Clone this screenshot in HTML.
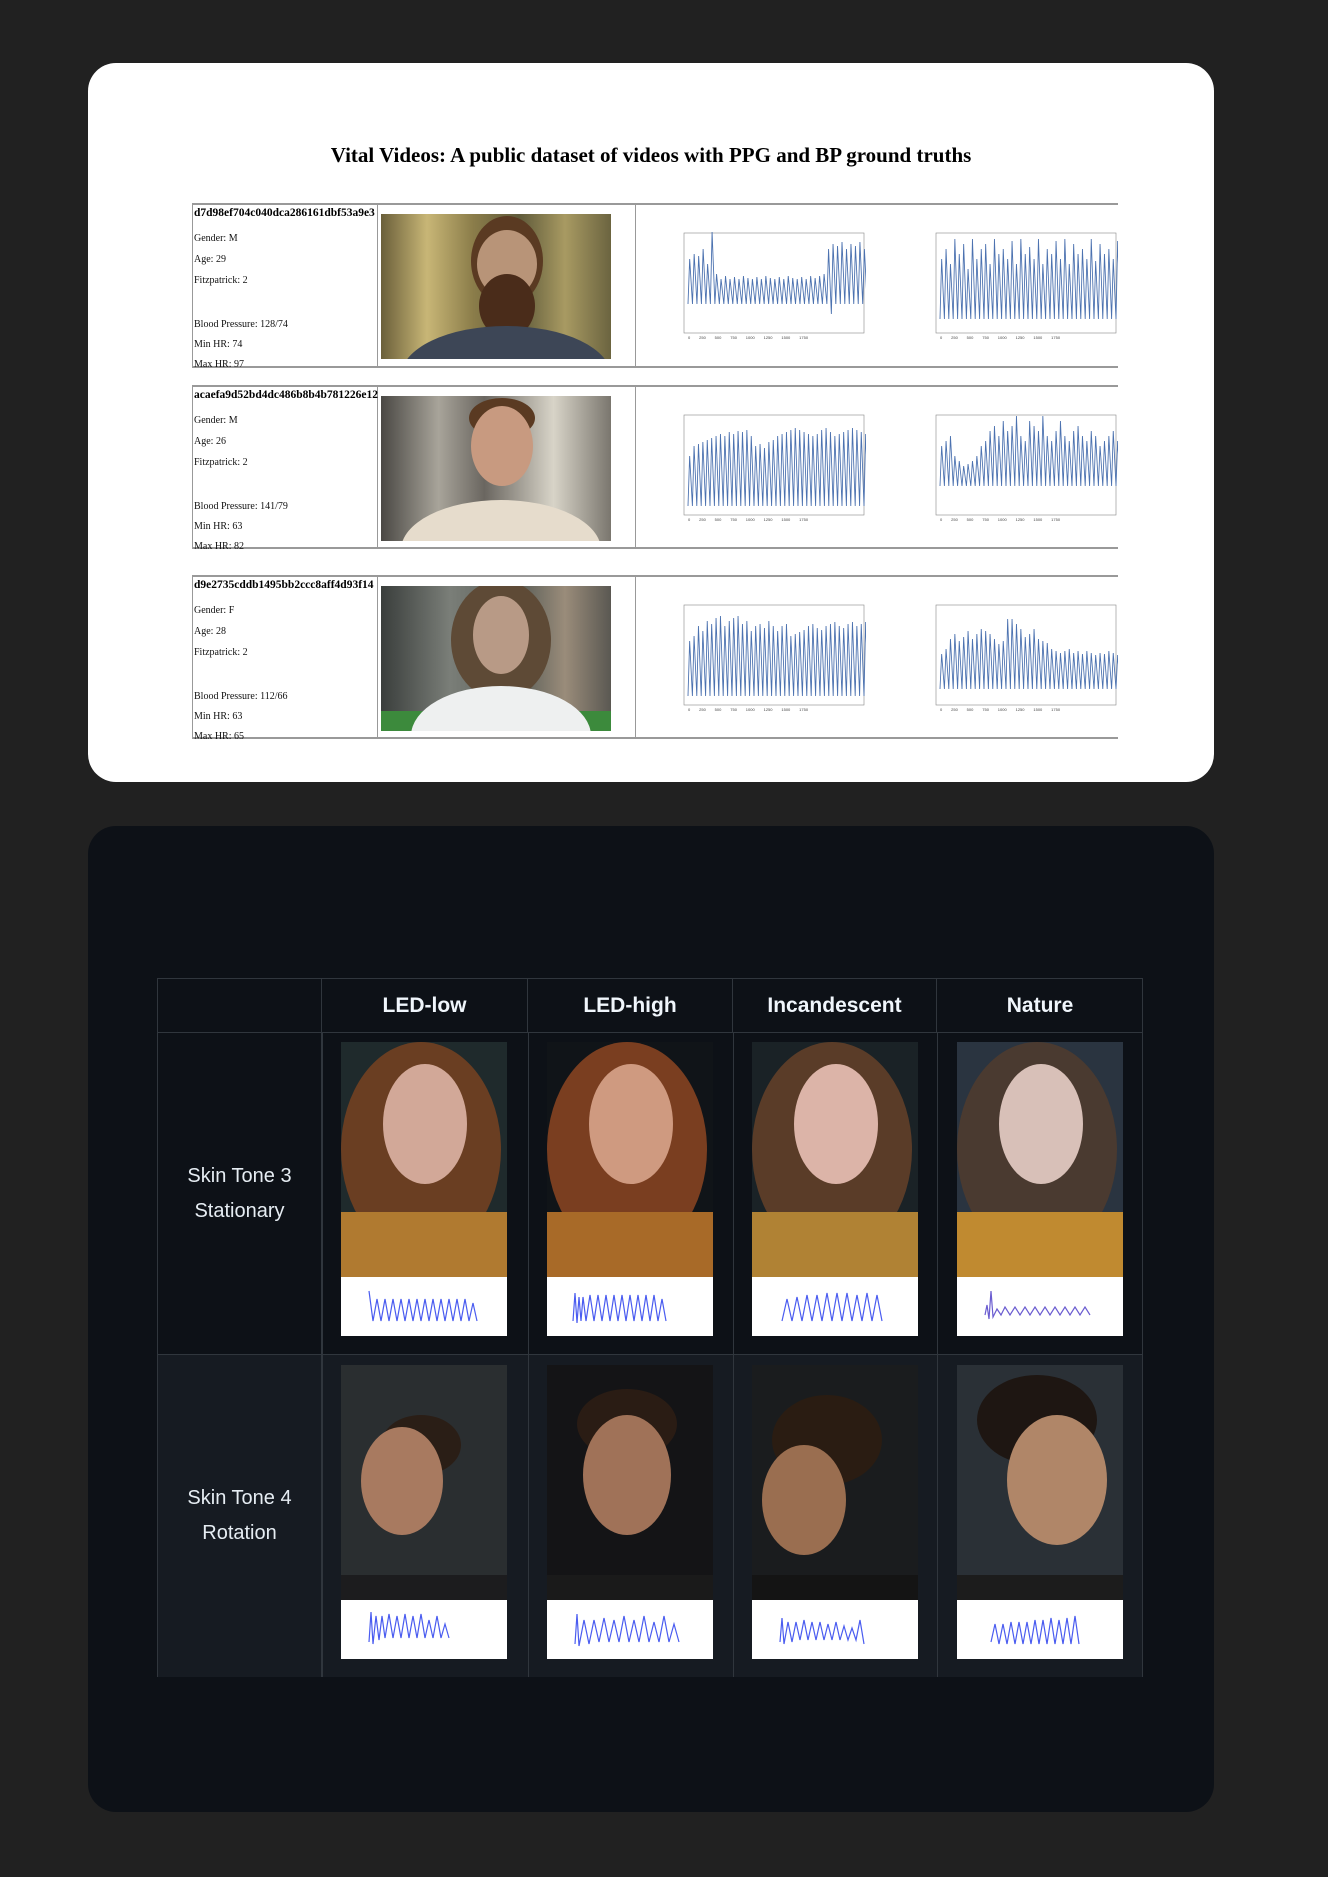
<!DOCTYPE html>
<html><head><meta charset="utf-8"><style>
*{margin:0;padding:0;box-sizing:border-box}
body{width:1328px;height:1877px;background:#212121;position:relative;overflow:hidden;font-family:"Liberation Serif",serif}
.card{position:absolute;left:88px;width:1126px;border-radius:28px}
.abs{position:absolute}
.title{position:absolute;top:80px;left:0;width:1126px;text-align:center;font-weight:bold;font-size:21px;color:#000}
.row{position:absolute;left:104px;width:926px;border-top:2px solid #999;border-bottom:2px solid #999}
.c1{position:absolute;left:0;top:0;bottom:0;width:186px;border-left:1px solid #999;border-right:1px solid #999;font-size:10px;color:#111}
.c2{position:absolute;left:186px;top:0;bottom:0;width:258px;border-right:1px solid #999}
.c1 b{position:absolute;left:1px;font-size:11.5px;color:#000}
.c1 span{position:absolute;left:1px}
.ph{position:absolute;left:3px;top:9px;width:230px;height:145px;overflow:hidden}
.ch{position:absolute;top:24px;width:196px;height:114px}
.cell{position:absolute;border-right:1px solid #30363d;border-bottom:1px solid #30363d}
.hd{color:#f0f6fc;font-family:"Liberation Sans",sans-serif;font-weight:bold;font-size:21px;text-align:center;line-height:54px}
.lab{color:#e6edf3;font-family:"Liberation Sans",sans-serif;font-size:20px;text-align:center;line-height:35px}
.fp{position:absolute;width:166px;height:294px;overflow:hidden}
.wv{position:absolute;left:0;bottom:0;width:166px;height:59px;background:#fff}
.o{position:absolute;border-radius:50%}
.ln{fill:none;stroke:#4c72b0;stroke-width:.8}
.wl{fill:none;stroke:#4a5cf0;stroke-width:1.2}
</style></head><body>

<div class="card" style="top:63px;height:719px;background:#fff">
<div class="title">Vital Videos: A public dataset of videos with PPG and BP ground truths</div>

<div class="row" style="top:140px;height:165px">
 <div class="c1"><b style="top:2px">d7d98ef704c040dca286161dbf53a9e3</b>
 <span style="top:28px">Gender: M</span><span style="top:49px">Age: 29</span><span style="top:70px">Fitzpatrick: 2</span>
 <span style="top:114px">Blood Pressure: 128/74</span><span style="top:134px">Min HR: 74</span><span style="top:154px">Max HR: 97</span></div>
 <div class="c2"><div class="ph" style="background:linear-gradient(90deg,#6a5f3a,#c8b676 20%,#8b7d4a 40%,#5f5a3a 60%,#a89a62 80%,#6b6440)">
  <div class="o" style="left:90px;top:2px;width:72px;height:90px;background:#5a3a22"></div>
  <div class="o" style="left:96px;top:16px;width:60px;height:68px;background:#b89478"></div>
  <div class="o" style="left:98px;top:60px;width:56px;height:64px;background:#4a2c1a"></div>
  <div class="o" style="left:20px;top:112px;width:210px;height:100px;background:#3d4656"></div></div></div>
 <svg class="ch" style="left:478px" viewBox="0 0 196 114"><rect x="14" y="4" width="180" height="100" fill="none" stroke="#888" stroke-width=".6"/><path class="ln" transform="translate(18,0) scale(1.12,1) translate(-18,0)" d="M18,75 l1.5,-45 l2.5,45 l1.5,-50 l2.5,50 l1.5,-48 l2.5,48 l1.5,-55 l2.5,55 l1.5,-40 l2.5,40 l1.5,-72 l2.5,72 l1.5,-30 l2.5,30 l1.5,-25 l2.5,25 l1.5,-28 l2.5,28 l1.5,-25 l2.5,25 l1.5,-27 l2.5,27 l1.5,-25 l2.5,25 l1.5,-28 l2.5,28 l1.5,-26 l2.5,26 l1.5,-25 l2.5,25 l1.5,-27 l2.5,27 l1.5,-25 l2.5,25 l1.5,-28 l2.5,28 l1.5,-26 l2.5,26 l1.5,-25 l2.5,25 l1.5,-27 l2.5,27 l1.5,-25 l2.5,25 l1.5,-28 l2.5,28 l1.5,-26 l2.5,26 l1.5,-25 l2.5,25 l1.5,-27 l2.5,27 l1.5,-25 l2.5,25 l1.5,-28 l2.5,28 l1.5,-26 l2.5,26 l1.5,-28 l2.5,28 l1.5,-30 l2.5,30 l1.5,-55 l2.5,65 l1.5,-70 l2.5,60 l1.5,-58 l2.5,58 l1.5,-62 l2.5,62 l1.5,-55 l2.5,55 l1.5,-60 l2.5,60 l1.5,-58 l2.5,58 l1.5,-62 l2.5,62 l1.5,-55 l2.5,55 l1.5,-60 l2.5,60 l1.5,-50 l2.5,50 l1.5,-45 l2.5,45"/><text x="18" y="110" font-size="4" fill="#444" font-family="Liberation Sans">0 &#160;&#160;&#160;&#160;&#160;&#160; 250 &#160;&#160;&#160;&#160;&#160;&#160; 500 &#160;&#160;&#160;&#160;&#160;&#160; 750 &#160;&#160;&#160;&#160;&#160;&#160; 1000 &#160;&#160;&#160;&#160;&#160;&#160; 1250 &#160;&#160;&#160;&#160;&#160;&#160; 1500 &#160;&#160;&#160;&#160;&#160;&#160; 1750</text></svg>
 <svg class="ch" style="left:730px" viewBox="0 0 196 114"><rect x="14" y="4" width="180" height="100" fill="none" stroke="#888" stroke-width=".6"/><path class="ln" transform="translate(18,0) scale(1.1,1) translate(-18,0)" d="M18,90 l1.5,-60 l2.5,60 l1.5,-70 l2.5,70 l1.5,-55 l2.5,55 l1.5,-80 l2.5,80 l1.5,-65 l2.5,65 l1.5,-75 l2.5,75 l1.5,-50 l2.5,50 l1.5,-80 l2.5,80 l1.5,-60 l2.5,60 l1.5,-70 l2.5,70 l1.5,-75 l2.5,75 l1.5,-55 l2.5,55 l1.5,-80 l2.5,80 l1.5,-65 l2.5,65 l1.5,-70 l2.5,70 l1.5,-60 l2.5,60 l1.5,-78 l2.5,78 l1.5,-55 l2.5,55 l1.5,-80 l2.5,80 l1.5,-65 l2.5,65 l1.5,-72 l2.5,72 l1.5,-60 l2.5,60 l1.5,-80 l2.5,80 l1.5,-55 l2.5,55 l1.5,-70 l2.5,70 l1.5,-65 l2.5,65 l1.5,-78 l2.5,78 l1.5,-60 l2.5,60 l1.5,-80 l2.5,80 l1.5,-55 l2.5,55 l1.5,-75 l2.5,75 l1.5,-65 l2.5,65 l1.5,-70 l2.5,70 l1.5,-60 l2.5,60 l1.5,-80 l2.5,80 l1.5,-58 l2.5,58 l1.5,-75 l2.5,75 l1.5,-65 l2.5,65 l1.5,-70 l2.5,70 l1.5,-60 l2.5,60 l1.5,-78 l2.5,78 l1.5,-55 l2.5,55 l1.5,-40 l2.5,40"/><text x="18" y="110" font-size="4" fill="#444" font-family="Liberation Sans">0 &#160;&#160;&#160;&#160;&#160;&#160; 250 &#160;&#160;&#160;&#160;&#160;&#160; 500 &#160;&#160;&#160;&#160;&#160;&#160; 750 &#160;&#160;&#160;&#160;&#160;&#160; 1000 &#160;&#160;&#160;&#160;&#160;&#160; 1250 &#160;&#160;&#160;&#160;&#160;&#160; 1500 &#160;&#160;&#160;&#160;&#160;&#160; 1750</text></svg>
</div>

<div class="row" style="top:322px;height:164px">
 <div class="c1"><b style="top:2px">acaefa9d52bd4dc486b8b4b781226e12</b>
 <span style="top:28px">Gender: M</span><span style="top:49px">Age: 26</span><span style="top:70px">Fitzpatrick: 2</span>
 <span style="top:114px">Blood Pressure: 141/79</span><span style="top:134px">Min HR: 63</span><span style="top:154px">Max HR: 82</span></div>
 <div class="c2"><div class="ph" style="background:linear-gradient(90deg,#4a4844,#a8a49a 25%,#6a6660 45%,#d8d4c8 75%,#7a766e)">
  <div class="o" style="left:88px;top:2px;width:66px;height:40px;background:#5a3a22"></div>
  <div class="o" style="left:90px;top:10px;width:62px;height:80px;background:#c89a80"></div>
  <div class="o" style="left:20px;top:104px;width:200px;height:100px;background:#e6dccc"></div></div></div>
 <svg class="ch" style="left:478px" viewBox="0 0 196 114"><rect x="14" y="4" width="180" height="100" fill="none" stroke="#888" stroke-width=".6"/><path class="ln" transform="translate(18,0) scale(1.1,1) translate(-18,0)" d="M18,95 l1.5,-50 l2.5,50 l1.5,-60 l2.5,60 l1.5,-62 l2.5,62 l1.5,-64 l2.5,64 l1.5,-66 l2.5,66 l1.5,-68 l2.5,68 l1.5,-70 l2.5,70 l1.5,-72 l2.5,72 l1.5,-70 l2.5,70 l1.5,-74 l2.5,74 l1.5,-72 l2.5,72 l1.5,-75 l2.5,75 l1.5,-74 l2.5,74 l1.5,-76 l2.5,76 l1.5,-70 l2.5,70 l1.5,-60 l2.5,60 l1.5,-62 l2.5,62 l1.5,-58 l2.5,58 l1.5,-64 l2.5,64 l1.5,-66 l2.5,66 l1.5,-70 l2.5,70 l1.5,-72 l2.5,72 l1.5,-74 l2.5,74 l1.5,-76 l2.5,76 l1.5,-78 l2.5,78 l1.5,-76 l2.5,76 l1.5,-74 l2.5,74 l1.5,-72 l2.5,72 l1.5,-70 l2.5,70 l1.5,-72 l2.5,72 l1.5,-76 l2.5,76 l1.5,-78 l2.5,78 l1.5,-74 l2.5,74 l1.5,-70 l2.5,70 l1.5,-72 l2.5,72 l1.5,-74 l2.5,74 l1.5,-76 l2.5,76 l1.5,-78 l2.5,78 l1.5,-76 l2.5,76 l1.5,-74 l2.5,74 l1.5,-72 l2.5,72 l1.5,-70 l2.5,70 l1.5,-68 l2.5,68"/><text x="18" y="110" font-size="4" fill="#444" font-family="Liberation Sans">0 &#160;&#160;&#160;&#160;&#160;&#160; 250 &#160;&#160;&#160;&#160;&#160;&#160; 500 &#160;&#160;&#160;&#160;&#160;&#160; 750 &#160;&#160;&#160;&#160;&#160;&#160; 1000 &#160;&#160;&#160;&#160;&#160;&#160; 1250 &#160;&#160;&#160;&#160;&#160;&#160; 1500 &#160;&#160;&#160;&#160;&#160;&#160; 1750</text></svg>
 <svg class="ch" style="left:730px" viewBox="0 0 196 114"><rect x="14" y="4" width="180" height="100" fill="none" stroke="#888" stroke-width=".6"/><path class="ln" transform="translate(18,0) scale(1.1,1) translate(-18,0)" d="M18,75 l1.5,-40 l2.5,40 l1.5,-45 l2.5,45 l1.5,-50 l2.5,50 l1.5,-30 l2.5,30 l1.5,-25 l2.5,25 l1.5,-20 l2.5,20 l1.5,-22 l2.5,22 l1.5,-25 l2.5,25 l1.5,-30 l2.5,30 l1.5,-40 l2.5,40 l1.5,-45 l2.5,45 l1.5,-55 l2.5,55 l1.5,-60 l2.5,60 l1.5,-50 l2.5,50 l1.5,-65 l2.5,65 l1.5,-55 l2.5,55 l1.5,-60 l2.5,60 l1.5,-70 l2.5,70 l1.5,-50 l2.5,50 l1.5,-45 l2.5,45 l1.5,-65 l2.5,65 l1.5,-60 l2.5,60 l1.5,-55 l2.5,55 l1.5,-70 l2.5,70 l1.5,-50 l2.5,50 l1.5,-45 l2.5,45 l1.5,-55 l2.5,55 l1.5,-65 l2.5,65 l1.5,-50 l2.5,50 l1.5,-45 l2.5,45 l1.5,-55 l2.5,55 l1.5,-60 l2.5,60 l1.5,-50 l2.5,50 l1.5,-45 l2.5,45 l1.5,-55 l2.5,55 l1.5,-50 l2.5,50 l1.5,-40 l2.5,40 l1.5,-45 l2.5,45 l1.5,-50 l2.5,50 l1.5,-55 l2.5,55 l1.5,-45 l2.5,45 l1.5,-50 l2.5,50 l1.5,-40 l2.5,40"/><text x="18" y="110" font-size="4" fill="#444" font-family="Liberation Sans">0 &#160;&#160;&#160;&#160;&#160;&#160; 250 &#160;&#160;&#160;&#160;&#160;&#160; 500 &#160;&#160;&#160;&#160;&#160;&#160; 750 &#160;&#160;&#160;&#160;&#160;&#160; 1000 &#160;&#160;&#160;&#160;&#160;&#160; 1250 &#160;&#160;&#160;&#160;&#160;&#160; 1500 &#160;&#160;&#160;&#160;&#160;&#160; 1750</text></svg>
</div>

<div class="row" style="top:512px;height:164px">
 <div class="c1"><b style="top:2px">d9e2735cddb1495bb2ccc8aff4d93f14</b>
 <span style="top:28px">Gender: F</span><span style="top:49px">Age: 28</span><span style="top:70px">Fitzpatrick: 2</span>
 <span style="top:114px">Blood Pressure: 112/66</span><span style="top:134px">Min HR: 63</span><span style="top:154px">Max HR: 65</span></div>
 <div class="c2"><div class="ph" style="background:linear-gradient(90deg,#3a3e3c,#7a7e78 30%,#5a5e58 60%,#9a8c7a 80%,#5a5852)">
  <div class="o" style="left:70px;top:-6px;width:100px;height:120px;background:#5e4a36"></div>
  <div class="o" style="left:92px;top:10px;width:56px;height:78px;background:#b89a86"></div>
  <div class="abs" style="left:0;top:125px;width:230px;height:20px;background:#3c8a3c"></div>
  <div class="o" style="left:30px;top:100px;width:180px;height:100px;background:#eef0f0"></div></div></div>
 <svg class="ch" style="left:478px" viewBox="0 0 196 114"><rect x="14" y="4" width="180" height="100" fill="none" stroke="#888" stroke-width=".6"/><path class="ln" transform="translate(18,0) scale(1.1,1) translate(-18,0)" d="M18,95 l1.5,-55 l2.5,55 l1.5,-60 l2.5,60 l1.5,-70 l2.5,70 l1.5,-65 l2.5,65 l1.5,-75 l2.5,75 l1.5,-72 l2.5,72 l1.5,-78 l2.5,78 l1.5,-80 l2.5,80 l1.5,-70 l2.5,70 l1.5,-75 l2.5,75 l1.5,-78 l2.5,78 l1.5,-80 l2.5,80 l1.5,-72 l2.5,72 l1.5,-75 l2.5,75 l1.5,-65 l2.5,65 l1.5,-70 l2.5,70 l1.5,-72 l2.5,72 l1.5,-68 l2.5,68 l1.5,-75 l2.5,75 l1.5,-70 l2.5,70 l1.5,-65 l2.5,65 l1.5,-70 l2.5,70 l1.5,-72 l2.5,72 l1.5,-60 l2.5,60 l1.5,-62 l2.5,62 l1.5,-64 l2.5,64 l1.5,-66 l2.5,66 l1.5,-70 l2.5,70 l1.5,-72 l2.5,72 l1.5,-68 l2.5,68 l1.5,-66 l2.5,66 l1.5,-70 l2.5,70 l1.5,-72 l2.5,72 l1.5,-74 l2.5,74 l1.5,-70 l2.5,70 l1.5,-68 l2.5,68 l1.5,-72 l2.5,72 l1.5,-74 l2.5,74 l1.5,-70 l2.5,70 l1.5,-72 l2.5,72 l1.5,-74 l2.5,74 l1.5,-70 l2.5,70 l1.5,-60 l2.5,60"/><text x="18" y="110" font-size="4" fill="#444" font-family="Liberation Sans">0 &#160;&#160;&#160;&#160;&#160;&#160; 250 &#160;&#160;&#160;&#160;&#160;&#160; 500 &#160;&#160;&#160;&#160;&#160;&#160; 750 &#160;&#160;&#160;&#160;&#160;&#160; 1000 &#160;&#160;&#160;&#160;&#160;&#160; 1250 &#160;&#160;&#160;&#160;&#160;&#160; 1500 &#160;&#160;&#160;&#160;&#160;&#160; 1750</text></svg>
 <svg class="ch" style="left:730px" viewBox="0 0 196 114"><rect x="14" y="4" width="180" height="100" fill="none" stroke="#888" stroke-width=".6"/><path class="ln" transform="translate(18,0) scale(1.1,1) translate(-18,0)" d="M18,88 l1.5,-35 l2.5,35 l1.5,-40 l2.5,40 l1.5,-50 l2.5,50 l1.5,-55 l2.5,55 l1.5,-48 l2.5,48 l1.5,-52 l2.5,52 l1.5,-58 l2.5,58 l1.5,-50 l2.5,50 l1.5,-55 l2.5,55 l1.5,-60 l2.5,60 l1.5,-58 l2.5,58 l1.5,-55 l2.5,55 l1.5,-50 l2.5,50 l1.5,-45 l2.5,45 l1.5,-48 l2.5,48 l1.5,-70 l2.5,70 l1.5,-70 l2.5,70 l1.5,-65 l2.5,65 l1.5,-60 l2.5,60 l1.5,-52 l2.5,52 l1.5,-55 l2.5,55 l1.5,-60 l2.5,60 l1.5,-50 l2.5,50 l1.5,-48 l2.5,48 l1.5,-46 l2.5,46 l1.5,-40 l2.5,40 l1.5,-38 l2.5,38 l1.5,-36 l2.5,36 l1.5,-38 l2.5,38 l1.5,-40 l2.5,40 l1.5,-36 l2.5,36 l1.5,-38 l2.5,38 l1.5,-35 l2.5,35 l1.5,-38 l2.5,38 l1.5,-36 l2.5,36 l1.5,-34 l2.5,34 l1.5,-36 l2.5,36 l1.5,-35 l2.5,35 l1.5,-38 l2.5,38 l1.5,-36 l2.5,36 l1.5,-34 l2.5,34 l1.5,-32 l2.5,32 l1.5,-30 l2.5,30"/><text x="18" y="110" font-size="4" fill="#444" font-family="Liberation Sans">0 &#160;&#160;&#160;&#160;&#160;&#160; 250 &#160;&#160;&#160;&#160;&#160;&#160; 500 &#160;&#160;&#160;&#160;&#160;&#160; 750 &#160;&#160;&#160;&#160;&#160;&#160; 1000 &#160;&#160;&#160;&#160;&#160;&#160; 1250 &#160;&#160;&#160;&#160;&#160;&#160; 1500 &#160;&#160;&#160;&#160;&#160;&#160; 1750</text></svg>
</div>
</div>

<div class="card" style="top:826px;height:986px;background:#0d1117">
 <div class="abs" style="left:69px;top:152px;width:986px;height:699px;border:1px solid #30363d">
  <div class="cell" style="left:0;top:0;width:164px;height:54px"></div>
  <div class="cell hd" style="left:164px;top:0;width:206px;height:54px">LED-low</div>
  <div class="cell hd" style="left:370px;top:0;width:205px;height:54px">LED-high</div>
  <div class="cell hd" style="left:575px;top:0;width:204px;height:54px">Incandescent</div>
  <div class="cell hd" style="left:779px;top:0;width:206px;height:54px;border-right:none">Nature</div>
  <div class="cell" style="left:0;top:54px;width:985px;height:322px"></div>
  <div class="cell" style="left:0;top:376px;width:985px;height:322px;background:#161b22;border-bottom:none"></div>
  <div class="cell lab" style="left:0;top:54px;width:164px;height:322px;padding-top:126px">Skin Tone 3<br>Stationary</div>
  <div class="cell lab" style="left:0;top:376px;width:164px;height:322px;padding-top:126px;border-bottom:none">Skin Tone 4<br>Rotation</div>
  <div class="cell" style="left:370px;top:54px;width:1px;height:644px;border:none;background:#30363d"></div>
  <div class="cell" style="left:575px;top:54px;width:1px;height:644px;border:none;background:#30363d"></div>
  <div class="cell" style="left:779px;top:54px;width:1px;height:644px;border:none;background:#30363d"></div>
  <div class="cell" style="left:164px;top:54px;width:1px;height:644px;border:none;background:#30363d"></div>
 </div>
</div>

<div class="fp" style="left:341px;top:1042px;background:#1f2a2c"><div class="o" style="left:0;top:0;width:160px;height:215px;background:#6a3e22"></div><div class="o" style="left:42px;top:22px;width:84px;height:120px;background:#d2a898"></div><div class="abs" style="left:0;top:170px;width:166px;height:70px;background:#b07a30"></div><div class="wv"><svg width="166" height="59"><path class="wl" d="M28,14 l4,30 l4,-22 l4,22 l4,-22 l4,22 l4,-22 l4,22 l4,-22 l4,22 l4,-22 l4,22 l4,-22 l4,22 l4,-22 l4,22 l4,-22 l4,22 l4,-22 l4,22 l4,-22 l4,22 l4,-22 l4,22 l4,-22 l4,22 l4,-18 l4,18"/></svg></div></div>
<div class="fp" style="left:547px;top:1042px;background:#101418"><div class="o" style="left:0;top:0;width:160px;height:215px;background:#7a3e20"></div><div class="o" style="left:42px;top:22px;width:84px;height:120px;background:#cf9a80"></div><div class="abs" style="left:0;top:170px;width:166px;height:70px;background:#a86a28"></div><div class="wv"><svg width="166" height="59"><path class="wl" d="M26,44 l2,-28 l2,30 l2,-26 l2,24 l2,-24 l3,24 l4,-26 l4,26 l4,-26 l4,26 l4,-26 l4,26 l4,-26 l4,26 l4,-26 l4,26 l4,-26 l4,26 l4,-26 l4,26 l4,-26 l4,26 l4,-26 l4,26 l4,-22 l4,22"/></svg></div></div>
<div class="fp" style="left:752px;top:1042px;background:#1a2226"><div class="o" style="left:0;top:0;width:160px;height:215px;background:#5a3c28"></div><div class="o" style="left:42px;top:22px;width:84px;height:120px;background:#dcb4a8"></div><div class="abs" style="left:0;top:170px;width:166px;height:70px;background:#b08234"></div><div class="wv"><svg width="166" height="59"><path class="wl" d="M30,44 l5,-22 l5,22 l5,-24 l5,24 l5,-26 l5,26 l5,-26 l5,26 l5,-28 l5,28 l5,-28 l5,28 l5,-28 l5,28 l5,-26 l5,26 l5,-28 l5,28 l5,-26 l5,26"/></svg></div></div>
<div class="fp" style="left:957px;top:1042px;background:#2a3440"><div class="o" style="left:0;top:0;width:160px;height:215px;background:#4a3a30"></div><div class="o" style="left:42px;top:22px;width:84px;height:120px;background:#d8c0b8"></div><div class="abs" style="left:0;top:170px;width:166px;height:70px;background:#c08a30"></div><div class="wv"><svg width="166" height="59"><path class="wl" style="stroke:#6a5cd0" d="M28,38 l2,-10 l2,14 l2,-28 l2,26 l4,-8 l4,6 l4,-8 l5,8 l5,-8 l5,8 l5,-8 l5,8 l5,-8 l5,8 l5,-8 l5,8 l5,-8 l5,8 l5,-8 l5,8 l5,-8 l5,8 l5,-8 l5,8"/></svg></div></div>

<div class="fp" style="left:341px;top:1365px;background:#2a2e30"><div class="o" style="left:40px;top:50px;width:80px;height:60px;background:#2a1e16"></div><div class="o" style="left:20px;top:62px;width:82px;height:108px;background:#a87a60"></div><div class="abs" style="left:0;top:210px;width:166px;height:30px;background:#1c1c1e"></div><div class="wv"><svg width="166" height="59"><path class="wl" d="M28,42 l2,-30 l2,32 l3,-28 l3,24 l3,-24 l3,22 l4,-24 l4,24 l4,-22 l4,22 l4,-24 l4,24 l4,-22 l4,22 l4,-24 l4,24 l4,-18 l4,18 l4,-22 l4,22 l4,-14 l4,14"/></svg></div></div>
<div class="fp" style="left:547px;top:1365px;background:#141416"><div class="o" style="left:30px;top:24px;width:100px;height:70px;background:#2a1c14"></div><div class="o" style="left:36px;top:50px;width:88px;height:120px;background:#a07258"></div><div class="abs" style="left:0;top:210px;width:166px;height:30px;background:#1a1a1a"></div><div class="wv"><svg width="166" height="59"><path class="wl" d="M28,44 l2,-30 l2,32 l5,-26 l5,24 l5,-24 l5,22 l5,-24 l5,24 l5,-22 l5,22 l5,-26 l5,26 l5,-22 l5,22 l5,-26 l5,26 l5,-20 l5,20 l5,-26 l5,26 l5,-18 l5,18"/></svg></div></div>
<div class="fp" style="left:752px;top:1365px;background:#1a1c1e"><div class="o" style="left:20px;top:30px;width:110px;height:90px;background:#2a1c12"></div><div class="o" style="left:10px;top:80px;width:84px;height:110px;background:#9a6e50"></div><div class="abs" style="left:0;top:210px;width:166px;height:30px;background:#141414"></div><div class="wv"><svg width="166" height="59"><path class="wl" d="M28,42 l2,-24 l2,26 l4,-22 l4,20 l4,-20 l4,18 l4,-20 l4,20 l4,-18 l4,18 l4,-18 l4,18 l4,-16 l4,16 l4,-18 l4,18 l4,-14 l4,14 l4,-12 l4,12 l4,-20 l4,24"/></svg></div></div>
<div class="fp" style="left:957px;top:1365px;background:#2a3036"><div class="o" style="left:20px;top:10px;width:120px;height:90px;background:#1e1612"></div><div class="o" style="left:50px;top:50px;width:100px;height:130px;background:#b08668"></div><div class="abs" style="left:0;top:210px;width:166px;height:30px;background:#1c1c1c"></div><div class="wv"><svg width="166" height="59"><path class="wl" d="M34,42 l4,-18 l4,20 l4,-20 l4,20 l4,-22 l4,22 l4,-22 l4,22 l4,-22 l4,22 l4,-24 l4,24 l4,-24 l4,24 l4,-26 l4,26 l4,-24 l4,24 l4,-26 l4,26 l4,-28 l4,28"/></svg></div></div>
</body></html>
